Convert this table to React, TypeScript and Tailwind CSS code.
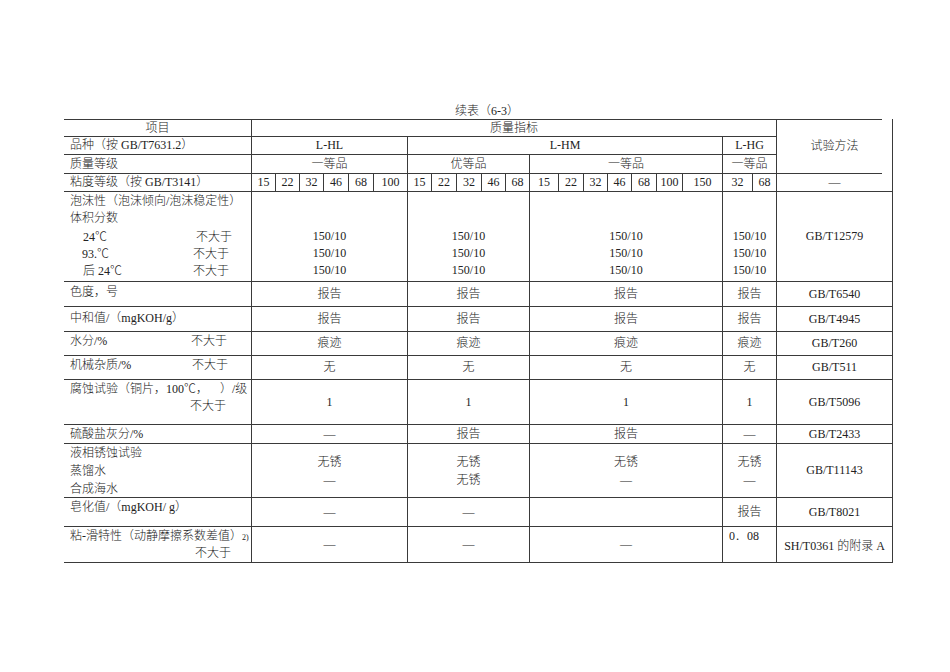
import React from "react";

const B = "border-r border-b border-[#3a3a3a]";
const C = "border-r border-b border-[#3a3a3a] flex items-center justify-center whitespace-nowrap";
const L = "border-r border-b border-[#3a3a3a] flex flex-col justify-center pl-[6px] whitespace-nowrap";
const LT = "border-r border-b border-[#3a3a3a] flex flex-col justify-start pl-[6px] whitespace-nowrap";

const hl = ["15", "22", "32", "46", "68", "100"];
const hmA = ["15", "22", "32", "46", "68"];
const hmB = ["15", "22", "32", "46", "68", "100", "150"];
const hg = ["32", "68"];

function FourRow({
  label,
  vals,
  method,
  labelClass = "",
}: {
  label: React.ReactNode;
  vals: string[];
  method: string;
  labelClass?: string;
}) {
  return (
    <>
      <div className={`${L} ${labelClass}`}>{label}</div>
      <div className={`${C} col-span-6`}>{vals[0]}</div>
      <div className={`${C} col-span-5`}>{vals[1]}</div>
      <div className={`${C} col-span-7`}>{vals[2]}</div>
      <div className={`${C} col-span-2`}>{vals[3]}</div>
      <div className={C}>{method}</div>
    </>
  );
}

export default function App() {
  return (
    <div
      className="w-[950px] min-h-[672px] bg-white text-[#222222] text-[12px] font-light pt-[103px]"
      style={{ fontFamily: '"Liberation Serif", "Noto Sans CJK SC", serif' }}
    >
      <div className="ml-[455px] h-[16px] leading-[16px]">续表（6-3）</div>
      <div className="ml-[64px] grid grid-cols-[188px_24px_24px_24px_25px_25px_34px_24px_25px_25px_24px_24px_29px_25px_24px_24px_25px_26px_40px_30px_24px_116px] grid-rows-[18px_18px_19px_18px_90px_25px_25px_24px_24px_45px_19px_54px_29px_36px] leading-[17px]">
        {/* Row 1 */}
        <div className={`${C} border-t`}>项目</div>
        <div className={`${C} border-t col-span-20`}>质量指标</div>
        <div className="row-span-3 border-r border-[#3a3a3a] flex flex-col">
          <div className="h-px bg-[#3a3a3a] mr-[10px]" />
          <div className="flex-1 flex items-center justify-center">试验方法</div>
          <div className="h-px bg-[#3a3a3a] mr-[10px]" />
        </div>

        {/* Row 2 */}
        <div className={L}>品种（按 GB/T7631.2）</div>
        <div className={`${C} col-span-6`}>L-HL</div>
        <div className={`${C} col-span-12`}>L-HM</div>
        <div className={`${C} col-span-2`}>L-HG</div>

        {/* Row 3 */}
        <div className={L}>质量等级</div>
        <div className={`${C} col-span-6`}>一等品</div>
        <div className={`${C} col-span-5`}>优等品</div>
        <div className={`${C} col-span-7`}>一等品</div>
        <div className={`${C} col-span-2`}>一等品</div>

        {/* Row 4 */}
        <div className={L}>粘度等级（按 GB/T3141）</div>
        {hl.map((v, i) => (
          <div key={"a" + i} className={C}>{v}</div>
        ))}
        {hmA.map((v, i) => (
          <div key={"b" + i} className={C}>{v}</div>
        ))}
        {hmB.map((v, i) => (
          <div key={"c" + i} className={C}>{v}</div>
        ))}
        {hg.map((v, i) => (
          <div key={"d" + i} className={C}>{v}</div>
        ))}
        <div className={C}>—</div>

        {/* Row 5 foam */}
        <div className={`${LT} pt-[1px]`}>
          <div>泡沫性（泡沫倾向/泡沫稳定性）</div>
          <div>体积分数</div>
          <div className="mt-[2px] flex flex-col">
            <div className="flex">
              <span className="pl-[13px] w-[126px]">24℃</span>
              <span>不大于</span>
            </div>
            <div className="flex">
              <span className="pl-[12px] w-[123px]">93.℃</span>
              <span>不大于</span>
            </div>
            <div className="flex">
              <span className="pl-[13px] w-[123px]">后 24℃</span>
              <span>不大于</span>
            </div>
          </div>
        </div>
        {["col-span-6", "col-span-5", "col-span-7", "col-span-2"].map((span, i) => (
          <div key={"f" + i} className={`${B} ${span} flex flex-col items-center pt-[36px]`}>
            <div>150/10</div>
            <div>150/10</div>
            <div>150/10</div>
          </div>
        ))}
        <div className={`${B} flex flex-col items-center pt-[36px]`}>GB/T12579</div>

        {/* Row 6-9 */}
        <FourRow label="色度，号" labelClass="pb-[4px]" vals={["报告", "报告", "报告", "报告"]} method="GB/T6540" />
        <FourRow label="中和值/（mgKOH/g）" labelClass="pb-[2px]" vals={["报告", "报告", "报告", "报告"]} method="GB/T4945" />
        <FourRow
          label={
            <div className="flex">
              <span className="w-[121px]">水分/%</span>
              <span>不大于</span>
            </div>
          }
          labelClass="pb-[4px]"
          vals={["痕迹", "痕迹", "痕迹", "痕迹"]}
          method="GB/T260"
        />
        <FourRow
          label={
            <div className="flex">
              <span className="w-[122px]">机械杂质/%</span>
              <span>不大于</span>
            </div>
          }
          labelClass="pb-[4px]"
          vals={["无", "无", "无", "无"]}
          method="GB/T511"
        />

        {/* Row 10 corrosion */}
        <div className={`${LT} pt-[1px]`}>
          <div>腐蚀试验（铜片，100℃，&nbsp;&nbsp;&nbsp;&nbsp;）/级</div>
          <div className="pl-[120px]">不大于</div>
        </div>
        <div className={`${C} col-span-6`}>1</div>
        <div className={`${C} col-span-5`}>1</div>
        <div className={`${C} col-span-7`}>1</div>
        <div className={`${C} col-span-2`}>1</div>
        <div className={C}>GB/T5096</div>

        {/* Row 11 */}
        <FourRow label="硫酸盐灰分/%" vals={["—", "报告", "报告", "—"]} method="GB/T2433" />

        {/* Row 12 rust */}
        <div className={`${LT} leading-[18px]`}>
          <div>液相锈蚀试验</div>
          <div>蒸馏水</div>
          <div>合成海水</div>
        </div>
        <div className={`${B} col-span-6 flex flex-col items-center pt-[9px] leading-[18px]`}>
          <div>无锈</div>
          <div>—</div>
        </div>
        <div className={`${B} col-span-5 flex flex-col items-center pt-[9px] leading-[18px]`}>
          <div>无锈</div>
          <div>无锈</div>
        </div>
        <div className={`${B} col-span-7 flex flex-col items-center pt-[9px] leading-[18px]`}>
          <div>无锈</div>
          <div>—</div>
        </div>
        <div className={`${B} col-span-2 flex flex-col items-center pt-[9px] leading-[18px]`}>
          <div>无锈</div>
          <div>—</div>
        </div>
        <div className={C}>GB/T11143</div>

        {/* Row 13 saponification */}
        <div className={`${LT} leading-[18px]`}>
          <div>皂化值/（mgKOH/ g）</div>
        </div>
        <div className={`${C} col-span-6`}>—</div>
        <div className={`${C} col-span-5`}>—</div>
        <div className={`${C} col-span-7`}></div>
        <div className={`${C} col-span-2`}>报告</div>
        <div className={C}>GB/T8021</div>

        {/* Row 14 stick-slip */}
        <div className={`${LT} pt-[1px]`}>
          <div>
            粘-滑特性（动静摩擦系数差值）
            <span className="text-[8px] align-top relative top-[1px]">2)</span>
          </div>
          <div className="pl-[125px]">不大于</div>
        </div>
        <div className={`${C} col-span-6`}>—</div>
        <div className={`${C} col-span-5`}>—</div>
        <div className={`${C} col-span-7`}>—</div>
        <div className={`${B} col-span-2 pl-[6px] pt-[1px]`}>0．08</div>
        <div className={`${C} pt-[4px]`}>SH/T0361 的附录 A</div>
      </div>
    </div>
  );
}
